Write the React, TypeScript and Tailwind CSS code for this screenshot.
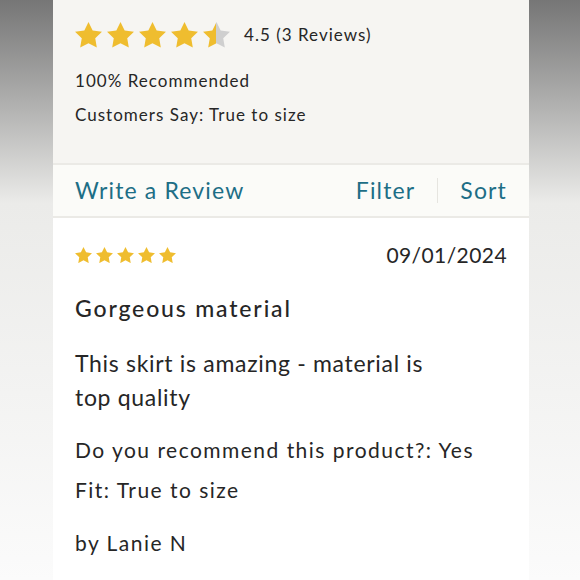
import React from "react";

const STAR = "M12 2l3.09 6.26L22 9.27l-5 4.87 1.18 6.88L12 17.77l-6.18 3.25L7 14.14 2 9.27l6.91-1.01L12 2z";

function Star({ size, half = false, id }: { size: number; half?: boolean; id?: string }) {
  return (
    <svg width={size} height={size * 0.95} viewBox="2 2 20 19.05" className="shrink-0">
      {half && (
        <defs>
          <linearGradient id={id} x1="0" x2="1" y1="0" y2="0">
            <stop offset="0.5" stopColor="#efbd2f" />
            <stop offset="0.5" stopColor="#cfcfcf" />
          </linearGradient>
        </defs>
      )}
      <path d={STAR} fill={half ? `url(#${id})` : "#efbd2f"} />
    </svg>
  );
}

export default function App() {
  return (
    <div
      className="w-[580px] h-[580px] flex overflow-hidden text-[#262626]"
      style={{ fontFamily: "Lato, 'Open Sans', sans-serif" }}
    >
      {/* Fundo lateral esquerdo */}
      <div className="w-[53px] h-full bg-gradient-to-b from-[#767676] via-[#ebebe9] via-35% to-[#fbfbfb]" />

      <div className="w-[476px] h-full flex flex-col bg-white">
        {/* Resumo */}
        <div className="h-[165px] bg-[#f6f5f2] px-[22px] pt-[22px] border-b-2 border-[#ebeae6] shrink-0">
          <div className="flex items-center h-[26px]">
            <div className="flex gap-[5px]">
              <Star size={27} />
              <Star size={27} />
              <Star size={27} />
              <Star size={27} />
              <Star size={27} half id="half" />
            </div>
            <span className="ml-[14px] text-[17px] leading-[24px] tracking-[0.06em]">4.5 (3 Reviews)</span>
          </div>
          <p className="mt-[21px] text-[17px] leading-[24px] tracking-[0.06em]">100% Recommended</p>
          <p className="mt-[10px] text-[17px] leading-[24px] tracking-[0.06em]">Customers Say: True to size</p>
        </div>

        {/* Barra de ações */}
        <div className="h-[53px] bg-[#fbfbf8] border-b-2 border-[#ebeae6] px-[22px] flex items-center text-[#1d6e86] text-[23px] tracking-[0.05em] shrink-0">
          <span>Write a Review</span>
          <span className="ml-auto">Filter</span>
          <span className="w-px h-[25px] bg-[#e6e5e0] mx-[22px]" />
          <span>Sort</span>
        </div>

        {/* Avaliação */}
        <div className="px-[22px] pt-[23px]">
          <div className="flex items-center justify-between h-[28px]">
            <div className="flex gap-[4px]">
              <Star size={17} />
              <Star size={17} />
              <Star size={17} />
              <Star size={17} />
              <Star size={17} />
            </div>
            <span className="text-[21px] leading-[28px] tracking-[0.02em]">09/01/2024</span>
          </div>
          <h2 className="mt-[24px] text-[23px] leading-[30px] font-medium tracking-[0.08em]">Gorgeous material</h2>
          <p className="mt-[23px] text-[23px] leading-[34px] tracking-[0.03em] w-[370px]">
            This skirt is amazing - material is top quality
          </p>
          <p className="mt-[22px] text-[21px] leading-[28px] tracking-[0.07em]">Do you recommend this product?: Yes</p>
          <p className="mt-[12px] text-[21px] leading-[28px] tracking-[0.07em]">Fit: True to size</p>
          <p className="mt-[25px] text-[21px] leading-[28px] tracking-[0.07em]">by Lanie N</p>
        </div>
      </div>

      {/* Fundo lateral direito */}
      <div className="flex-1 h-full bg-gradient-to-b from-[#767676] via-[#ebebe9] via-35% to-[#fbfbfb]" />
    </div>
  );
}
